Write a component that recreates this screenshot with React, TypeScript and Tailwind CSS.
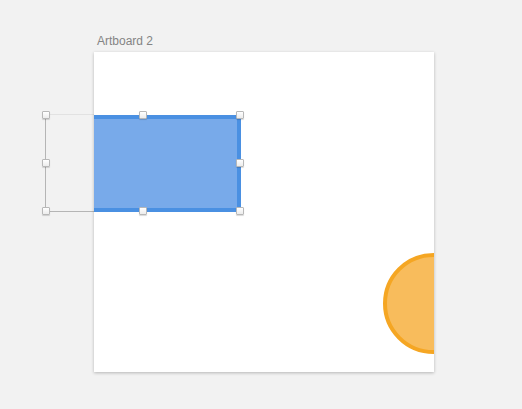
export default function App() {
  const handles: [number, number][] = [
    [46, 115], [143, 115], [240, 115],
    [46, 163], [240, 163],
    [46, 211], [143, 211], [240, 211],
  ];

  return (
    <div className="relative h-[409px] w-[522px] overflow-hidden bg-[#f2f2f2] font-['Liberation_Sans',Arial,sans-serif]">
      <div className="absolute left-[97px] top-[34px] text-[12px] leading-[14px] text-[#848484]">
        Artboard 2
      </div>

      {/* selection outline (visible outside artboard) */}
      <div className="absolute left-[45px] top-[114px] h-[98px] w-[196px] border border-[#b5b5b5] border-t-[#e2e2e2]" />

      {/* artboard */}
      <div className="absolute left-[94px] top-[52px] h-[320px] w-[340px] overflow-hidden bg-white shadow-[0_1px_3px_rgba(0,0,0,0.25)]">
        <div className="absolute left-[-48px] top-[63px] h-[97px] w-[195px] border-4 border-[#4a90e2] bg-[#78aaea]" />
        <div className="absolute left-[289px] top-[201px] h-[101px] w-[101px] rounded-full border-4 border-[#f5a623] bg-[#f8bc5c]" />
      </div>

      {handles.map(([x, y], i) => (
        <div
          key={i}
          className="absolute h-[8px] w-[8px] -translate-x-1/2 -translate-y-1/2 rounded-[1px] border border-[#b8b8b8] bg-gradient-to-b from-white to-[#ececec] shadow-[0_1px_1px_rgba(0,0,0,0.15)]"
          style={{ left: x, top: y }}
        />
      ))}
    </div>
  );
}
